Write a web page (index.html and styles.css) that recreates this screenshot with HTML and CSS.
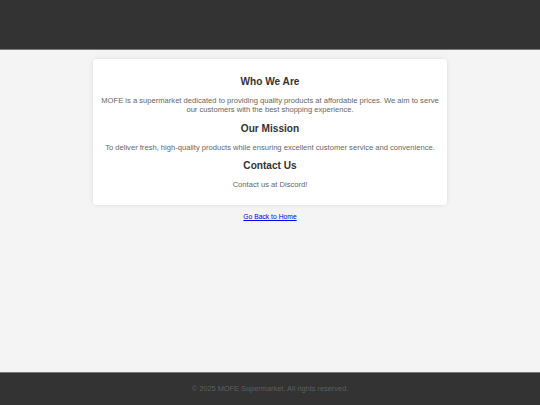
FILE: index.html
```html
<!DOCTYPE html>
<html lang="en">
<head>
<meta charset="utf-8">
<title>About MOFE</title>
<link rel="stylesheet" href="styles.css">
</head>
<body>
<header class="site-header"></header>
<main class="content">
  <section class="card">
    <h2 class="card-title">Who We Are</h2>
    <p class="card-text">MOFE is a supermarket dedicated to providing quality products at affordable prices. We aim to serve our customers with the best shopping experience.</p>
    <h2 class="card-title">Our Mission</h2>
    <p class="card-text">To deliver fresh, high-quality products while ensuring excellent customer service and convenience.</p>
    <h2 class="card-title">Contact Us</h2>
    <p class="card-text">Contact us at Discord!</p>
  </section>
  <a class="back-link" href="#">Go Back to Home</a>
</main>
<footer class="site-footer">© 2025 MOFE Supermarket. All rights reserved.</footer>
</body>
</html>
```
FILE: styles.css
```css
html, body {
  margin: 0;
  padding: 0;
}
body {
  min-height: 100vh;
  display: flex;
  flex-direction: column;
  background: #f4f4f4;
  font-family: "Liberation Sans", Arial, sans-serif;
}
.site-header {
  height: 50px;
  background: #333;
  border-bottom: 1px solid #7a7a7a;
  box-sizing: border-box;
}
.content {
  flex: 1;
  display: flex;
  flex-direction: column;
  align-items: center;
  padding-top: 9px;
}
.card {
  width: 354px;
  box-sizing: border-box;
  background: #fff;
  border-radius: 4px;
  box-shadow: 0 0 4px rgba(0, 0, 0, 0.1);
  padding: 17px 6px 16px;
  text-align: center;
}
.card-title {
  margin: 0 0 8px;
  font-size: 10.1px;
  line-height: 12px;
  font-weight: bold;
  color: #333;
}
.card-text {
  margin: 0 0 8.5px;
  font-size: 7.6px;
  line-height: 9px;
  color: #666;
}
.card-text:last-child {
  margin-bottom: 0;
}
.back-link {
  margin-top: 7px;
  font-size: 6.75px;
  line-height: 9px;
  color: #0000ee;
  text-decoration: underline;
}
.site-footer {
  height: 33px;
  box-sizing: border-box;
  background: #333;
  border-top: 1px solid #7a7a7a;
  color: #5f5f5f;
  font-size: 7.4px;
  padding-bottom: 1px;
  display: flex;
  align-items: center;
  justify-content: center;
}
```
